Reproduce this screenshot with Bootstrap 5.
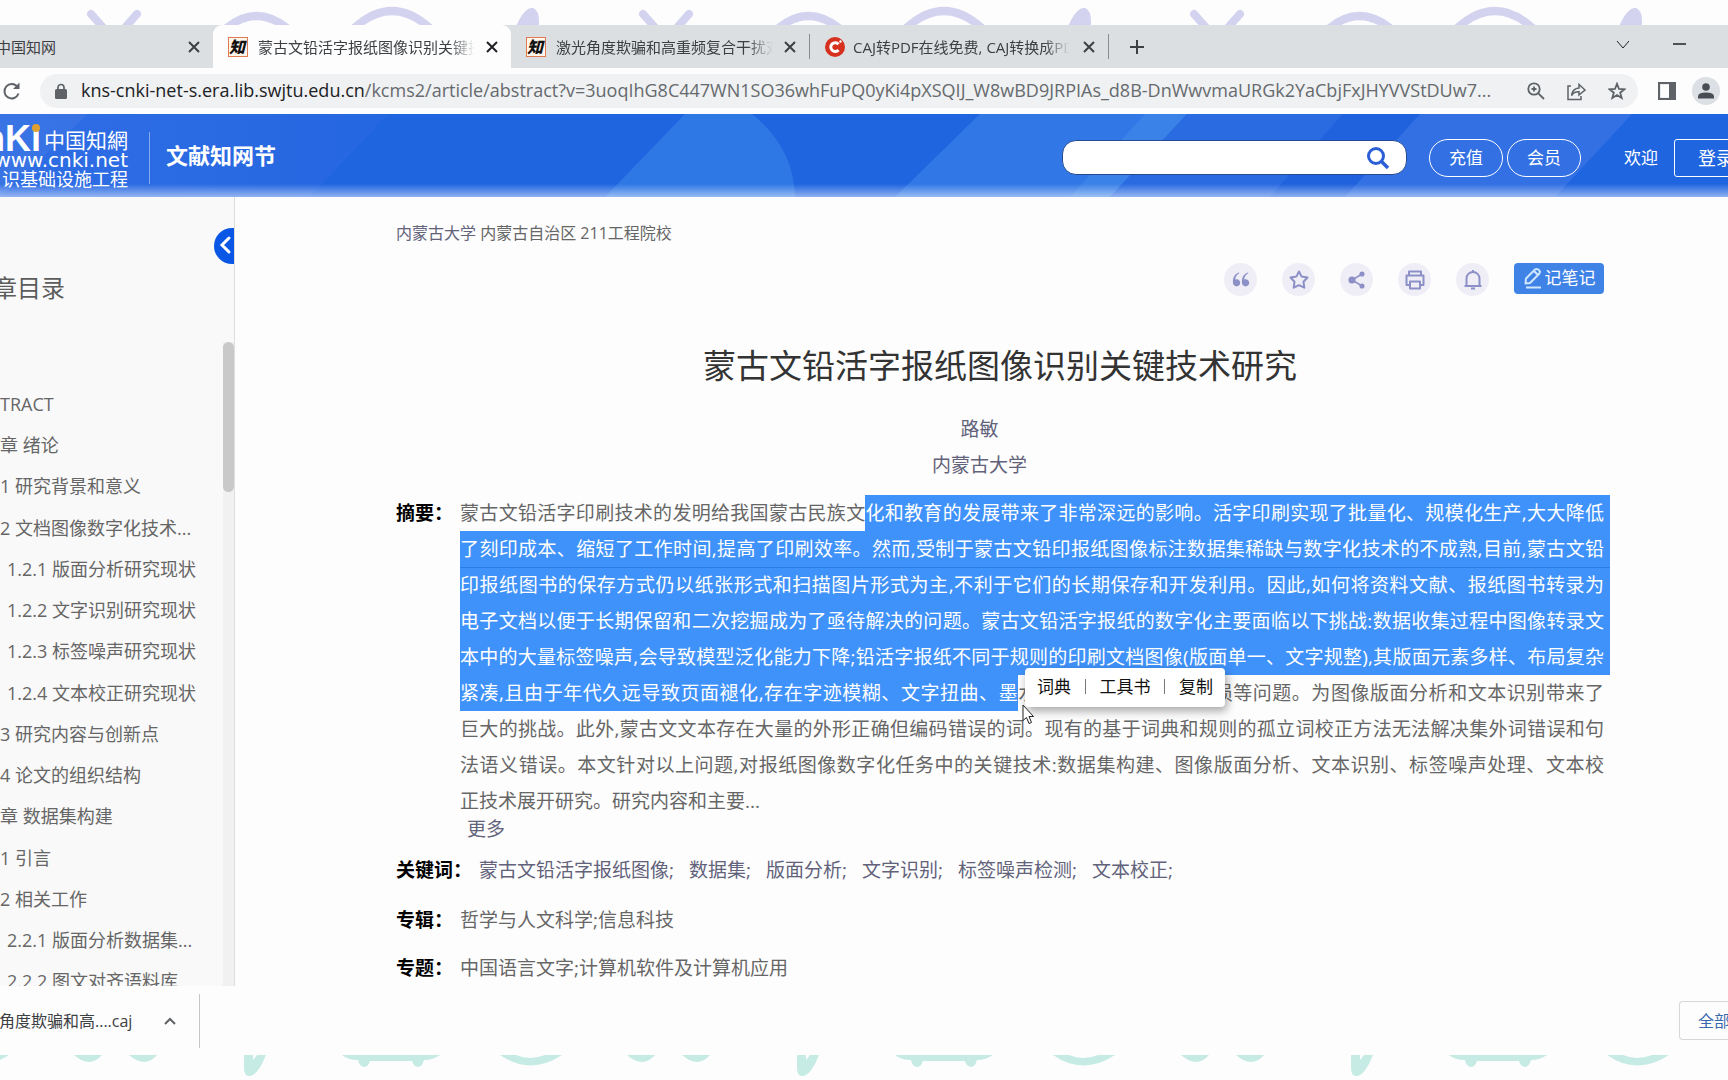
<!DOCTYPE html>
<html lang="zh-CN">
<head>
<meta charset="utf-8">
<meta name="viewport" content="width=device-width, initial-scale=1">
<title>蒙古文铅活字报纸图像识别关键技术研究</title>
<link href="https://cdn.jsdelivr.net/npm/bootstrap@5.3.0/dist/css/bootstrap.min.css" rel="stylesheet">
<style>
body{font-family:"Open Sans","Noto Sans CJK SC",sans-serif;background:#fdfdfd;color:#666;font-size:19px;line-height:28px}
a{color:inherit;text-decoration:none}
svg{display:block;flex:none}
.plain-btn{border:0;background:none;padding:0;color:inherit;line-height:1}
.strip{height:25px;overflow:hidden;flex:none}
/* browser tabs */
.tabbar{height:43px;background:#dcdfe2;color:#3c4043;font-size:15px;line-height:24px;flex:none}
.tab-a{width:213px;padding:0 12px 0 0;border-radius:0 0 10px 0}
.tab-b{width:298px;padding:0 12px 0 15px}
.tab-on{background:#fdfdfd;border-radius:9px 9px 0 0}
.tab-rule{width:1px;height:25px;background:#888b90}
.tab-name{overflow:hidden;white-space:nowrap;width:217px;-webkit-mask-image:linear-gradient(90deg,#000 88%,transparent 100%)}
.tab-cut{margin-left:-4px}
.fav{width:20px;height:20px;border:1px solid #e07a50;background:#fff6ec;color:#111;font:italic 900 16px/17px "Noto Sans CJK SC",sans-serif;overflow:hidden;flex:none;margin-right:10px}
.win-min{margin:0 42px 0 43px}
/* address bar */
.toolbar{height:46px;background:#fdfdfd;color:#5f6368;flex:none}
.omni{height:34px;border-radius:17px;background:#eff1f2;font-size:18px;padding:0 12px 0 15px;min-width:0}
.omni-url{white-space:nowrap;overflow:hidden;color:#666a6e;margin-left:14px;padding-bottom:2px}
.omni-url b{font-weight:400;color:#202124}
.omni-acts{gap:22px}
.avatar{width:28px;height:28px;background:#dcdfe4}
/* site header */
.site{height:83px;background:#2065e0;color:#fff;overflow:hidden;flex:none}
.site-art{position:absolute;inset:0;width:100%;height:100%}
.site-row{position:relative;height:87px}
.site-name{font-size:22px;font-weight:700;padding-bottom:6px}
.site-logo{padding-bottom:4px}
.site-rule{width:1px;height:52px;background:#86aaf0}
.seek{width:345px;height:35px;border:1px solid #234a93;border-radius:14px;background:#fff;padding:0 16px;overflow:hidden;margin-right:22px}
.seek input{border:0;outline:0;background:none;min-width:0;color:#333;font-size:17px}
.pill{width:74px;height:38px;border:1px solid #fff;border-radius:19px;background:none;color:#fff;font-size:17px;padding:0}
.login{width:90px;height:38px;border:1px solid #fff;border-radius:3px 0 0 3px;background:none;color:#fff;font-size:18px;padding:0 0 0 23px;text-align:left;margin-right:-36px}
.hello{font-size:17px;margin-left:43px}
/* contents column */
.toc{width:235px;background:#f9f9f9;border-right:1px solid #dedede;flex:none;overflow:hidden;position:relative}
.toc-title{font-size:24px;line-height:32px;margin:75px 0 38px -7px;color:#5c5c5c}
.toc-list{height:660px;font-size:18px;color:#666;list-style:none}
.toc-list a{white-space:nowrap}
.lv2{padding-left:7px}
.fold{position:absolute;right:0;top:31px;width:20px;height:36px;border-radius:18px 0 0 18px;background:#0a57e6}
.track{width:11px;background:#f1f1f1}
.thumb{height:150px;border-radius:6px;background:#c9c9c9}
/* article */
.article{padding:24px 118px 0 161px;min-width:0}
.crumb{font-size:16px;line-height:24px}
.slate{color:#62627a}
.tools{gap:25px;padding-right:6px;margin:18px 0 46px}
.tool{width:33px;height:33px;border-radius:50%;background:#efeef7}
.note{width:90px;height:31px;border-radius:4px;background:#4083e6;color:#fff;font-size:17px;line-height:1;border:0;padding:0 0 2px;margin-bottom:2px}
.art-title{font-size:33px;line-height:48px;color:#333;font-weight:400;margin:0 6px 25px 0}
.by{padding-right:47px}
.tag-name{color:#000;font-weight:700;margin-right:7px;flex:none}
.abs{line-height:36px;position:relative;min-width:0}
.ln{display:block;white-space:nowrap;text-align:justify;text-align-last:justify;padding-right:6px}
.ln-end{text-align-last:left}
.on{background:#3f92f9;color:#fff}
.on-rule{box-shadow:inset 0 1px #2b7de6}
.sel{background:#3f92f9;color:#fff;padding:5px 0}
.ln-open{padding-right:0}
.ln-open .sel{padding-right:6px}
.more{line-height:20px;padding-left:7px}
.bubble{position:absolute;left:565px;top:173px;width:200px;height:39px;background:#fff;border-radius:4px;box-shadow:2px 4px 10px rgba(0,0,0,.35);color:#111;font-size:17px;line-height:1;padding:0 12px 3px}
.bubble i{width:1px;height:15px;background:#777}
.pointer{position:absolute;left:562px;top:209px}
.keys{gap:15px}
.meta-1{margin-top:17px}.meta-2{margin-top:22px}.meta-3{margin-top:20px}
/* downloads */
.shelf{height:69px;font-size:16px;color:#3c4043;flex:none;overflow:hidden}
.shelf-item{width:200px;height:54px;border-right:1px solid #c4c6c9;padding-right:22px}
.shelf-item a{margin-left:-1px}
.shelf-all{width:49px;height:39px;border:1px solid #d5d7da;border-right:0;border-radius:4px 0 0 4px;background:none;color:#3a68ad;font-size:16px;white-space:nowrap;overflow:hidden;padding:0 0 0 18px;text-align:left}
</style>
<script src="https://cdn.jsdelivr.net/npm/bootstrap@5.3.0/dist/js/bootstrap.bundle.min.js"></script>
</head>
<body class="d-flex flex-column vh-100 overflow-hidden">

<div class="strip">
<svg width="1728" height="25" fill="none" stroke="#d3d3f0" stroke-width="8" stroke-linecap="round" aria-hidden="true">
<defs><g id="doodle"><path d="M91 14L107 32M137 14L121 32M222 32Q256 0 292 32M350 32Q392 -10 434 32"/><path d="M518 32Q526 12 532 12Q537 14 534 32Z" fill="#d3d3f0"/></g></defs>
<use href="#doodle" x="-553"/><use href="#doodle"/><use href="#doodle" x="552"/><use href="#doodle" x="1103"/>
</svg>
</div>

<nav class="tabbar d-flex align-items-center" aria-label="标签页">
<div class="tab-a d-flex align-items-center justify-content-between h-100"><span class="tab-cut">中国知网</span>
<button class="plain-btn" aria-label="关闭"><svg width="14" height="14" stroke="#3c4043" stroke-width="2"><path d="M2 2L12 12M12 2L2 12"/></svg></button></div>
<div class="tab-b tab-on d-flex align-items-center h-100"><span class="fav">知</span><span class="tab-name">蒙古文铅活字报纸图像识别关键技术研究</span>
<button class="plain-btn ms-auto" aria-label="关闭"><svg width="14" height="14" stroke="#202124" stroke-width="2"><path d="M2 2L12 12M12 2L2 12"/></svg></button></div>
<div class="tab-b d-flex align-items-center h-100"><span class="fav">知</span><span class="tab-name">激光角度欺骗和高重频复合干扰对激光</span>
<button class="plain-btn ms-auto" aria-label="关闭"><svg width="14" height="14" stroke="#3c4043" stroke-width="2"><path d="M2 2L12 12M12 2L2 12"/></svg></button></div>
<span class="tab-rule"></span>
<div class="tab-b d-flex align-items-center h-100"><svg class="me-2" width="20" height="20"><circle cx="10" cy="10" r="10" fill="#d6301f"/><path d="M13.500 7.200A4.400 4.400 0 1 0 13.500 13" fill="none" stroke="#fff" stroke-width="3"/><circle cx="15.500" cy="4.500" r="1.200" fill="#fff"/></svg><span class="tab-name">CAJ转PDF在线免费, CAJ转换成PDF在线</span>
<button class="plain-btn ms-auto" aria-label="关闭"><svg width="14" height="14" stroke="#3c4043" stroke-width="2"><path d="M2 2L12 12M12 2L2 12"/></svg></button></div>
<span class="tab-rule"></span>
<button class="plain-btn ms-3 ps-1" aria-label="新标签页"><svg width="16" height="16" stroke="#3c4043" stroke-width="2"><path d="M8 1V15M1 8H15"/></svg></button>
<button class="plain-btn ms-auto" aria-label="搜索标签页"><svg width="14" height="14" fill="none" stroke="#222"><path d="M1 1L7 8L13 1"/></svg></button>
<button class="plain-btn win-min" aria-label="最小化"><svg width="13" height="14" stroke="#222" stroke-width="1.500"><path d="M0 4H13"/></svg></button>
</nav>

<div class="toolbar d-flex align-items-center">
<button class="plain-btn me-3 pe-1" aria-label="重新加载"><svg width="20" height="20" fill="none" stroke="#5f6368" stroke-width="2"><path d="M17.500 6A7.200 7.200 0 1 0 18.500 12.500"/><path d="M19.500 1.500V8H13Z" fill="#5f6368" stroke="none"/></svg></button>
<div class="omni d-flex align-items-center flex-grow-1">
<svg width="12" height="16"><path d="M3 7V4.500a3 3 0 0 1 6 0V7" fill="none" stroke="#5f6368" stroke-width="1.700"/><rect y="6" width="12" height="10" rx="1.500" fill="#5f6368"/></svg>
<span class="omni-url"><b>kns-cnki-net-s.era.lib.swjtu.edu.cn</b>/kcms2/article/abstract?v=3uoqIhG8C447WN1SO36whFuPQ0yKi4pXSQIJ_W8wBD9JRPIAs_d8B-DnWwvmaURGk2YaCbjFxJHYVVStDUw7...</span>
<div class="omni-acts d-flex align-items-center ms-auto">
<button class="plain-btn" aria-label="缩放"><svg width="18" height="18" fill="none" stroke="#5f6368" stroke-width="1.800"><circle cx="7" cy="7" r="5.700"/><path d="M11.300 11.300L17 17M4.500 7H9.500M7 4.500V9.500"/></svg></button>
<button class="plain-btn" aria-label="分享"><svg width="19" height="19" fill="none" stroke="#5f6368" stroke-width="1.500"><path d="M4 4H1V17.500H14V14M4.500 13.500Q5.500 6.500 12 6V2.500L18 8L12 13V9.800Q7 9.500 4.500 13.500Z"/></svg></button>
<button class="plain-btn" aria-label="收藏"><svg width="18" height="18" fill="none" stroke="#5f6368" stroke-width="1.800"><path d="M9 1.800L11 7L16.500 7.300L12.200 10.700L13.700 16L9 13L4.300 16L5.800 10.700L1.500 7.300L7 7Z"/></svg></button>
</div></div>
<button class="plain-btn ms-3 ps-1" aria-label="侧边栏"><svg width="18" height="18"><rect x="1" y="1" width="16" height="16" fill="none" stroke="#5f6368" stroke-width="2.200"/><path d="M11 1H17V17H11Z" fill="#5f6368"/></svg></button>
<button class="plain-btn avatar rounded-circle d-flex justify-content-center align-items-center ms-3 me-2" aria-label="用户"><svg width="16" height="16" fill="#484c55"><circle cx="8" cy="4" r="3.800"/><path d="M0 15.500V13.500Q0 9.500 8 9.500T16 13.500V15.500Z"/></svg></button>
</div>

<header class="site position-relative">
<svg class="site-art" viewBox="0 0 1728 83" preserveAspectRatio="none" aria-hidden="true">
<defs><linearGradient id="fade" x2="0" y2="1"><stop offset="0" stop-color="#fff" stop-opacity="0"/><stop offset="1" stop-color="#fff" stop-opacity=".5"/></linearGradient>
<linearGradient id="left" x2="1"><stop offset="0" stop-color="#2f6de4"/><stop offset="1" stop-color="#2567e1"/></linearGradient></defs>
<path d="M0 0H388L310 83H0Z" fill="url(#left)"/><path d="M0 0H88L0 83Z" fill="#fff" opacity=".05"/>
<path d="M685 0H752Q794 34 795 83H605Z" fill="#2e78e5"/>
<path d="M980 0H1187L1110 83H895Z" fill="#3178e6"/><path d="M1145 0H1187L1110 83H1070Z" fill="#3b82e8"/>
<path d="M1187 0H1343L1270 83H1110Z" fill="#2b6be2"/>
<path d="M1343 0H1420L1345 83H1270Z" fill="#2062dd"/>
<path d="M1420 0H1632L1555 83H1345Z" fill="#3270e4"/>
<rect y="70" width="1728" height="13" fill="url(#fade)"/>
</svg>
<div class="site-row d-flex align-items-center">
<a href="#" class="site-logo" aria-label="中国知网"><svg width="149" height="64" fill="#fff">
<g font-family="Liberation Sans" font-weight="700" font-size="36"><text x="31" y="27" text-anchor="end">nK</text><text x="31" y="27">ı</text></g>
<circle cx="36" cy="4" r="4" fill="#e0a030"/>
<text x="128" y="24" text-anchor="end" font-family="Noto Sans CJK SC" font-size="21">中国知網</text>
<text x="128" y="43" text-anchor="end" font-family="DejaVu Sans" font-size="20">www.cnki.net</text>
<text x="128" y="62" text-anchor="end" font-family="Noto Sans CJK SC" font-size="18">识基础设施工程</text></svg></a>
<span class="site-rule me-3"></span>
<span class="site-name">文献知网节</span>
<form class="seek d-flex align-items-center ms-auto" onsubmit="return false"><input class="flex-grow-1" type="text" aria-label="检索"><button class="plain-btn" aria-label="搜索"><svg width="24" height="24" fill="none" stroke="#2b5fd6" stroke-width="3"><circle cx="10" cy="10" r="7.500"/><path d="M15.500 15.500L22 22" stroke-width="3.500"/></svg></button></form>
<button class="pill me-1">充值</button>
<button class="pill">会员</button>
<a href="#" class="hello me-3">欢迎</a>
<button class="login">登录</button>
</div>
</header>

<main class="d-flex flex-grow-1" style="min-height:0">
<aside class="toc">
<button class="plain-btn fold" aria-label="收起目录"><svg width="20" height="36" fill="none" stroke="#fff" stroke-width="3" stroke-linecap="round"><path d="M15 10L8 17L15 24"/></svg></button>
<h2 class="toc-title fw-normal">章目录</h2>
<div class="d-flex">
<ul class="toc-list d-grid align-items-center flex-grow-1 p-0 m-0">
<li>&nbsp;</li>
<li><a href="#">TRACT</a></li>
<li><a href="#">章 绪论</a></li>
<li><a href="#">1 研究背景和意义</a></li>
<li><a href="#">2 文档图像数字化技术...</a></li>
<li class="lv2"><a href="#">1.2.1 版面分析研究现状</a></li>
<li class="lv2"><a href="#">1.2.2 文字识别研究现状</a></li>
<li class="lv2"><a href="#">1.2.3 标签噪声研究现状</a></li>
<li class="lv2"><a href="#">1.2.4 文本校正研究现状</a></li>
<li><a href="#">3 研究内容与创新点</a></li>
<li><a href="#">4 论文的组织结构</a></li>
<li><a href="#">章 数据集构建</a></li>
<li><a href="#">1 引言</a></li>
<li><a href="#">2 相关工作</a></li>
<li class="lv2"><a href="#">2.2.1 版面分析数据集...</a></li>
<li class="lv2"><a href="#">2.2.2 图文对齐语料库</a></li>
</ul>
<div class="track"><div class="thumb"></div></div>
</div>
</aside>

<article class="article flex-grow-1">
<div class="crumb"><a href="#" class="slate">内蒙古大学</a> 内蒙古自治区 211工程院校</div>
<div class="tools d-flex justify-content-end align-items-center">
<button class="plain-btn tool d-flex justify-content-center align-items-center" aria-label="引用"><svg width="18" height="16" fill="#8c90c6"><path d="M7.500 1Q3.500 3 3.200 7.500A3.600 3.600 0 1 1 1 11Q0 3.500 6.500 0.500ZM16.500 1Q12.500 3 12.200 7.500A3.600 3.600 0 1 1 10 11Q9 3.500 15.500 0.500Z"/></svg></button>
<button class="plain-btn tool d-flex justify-content-center align-items-center" aria-label="收藏"><svg width="20" height="20" fill="none" stroke="#8c90c6" stroke-width="2" stroke-linejoin="round"><path d="M10 1.500L12.600 6.600L18.500 7.500L14.500 11.800L15.300 17.700L10 15.200L4.700 17.700L5.500 11.800L1.500 7.500L7.400 6.600Z"/></svg></button>
<button class="plain-btn tool d-flex justify-content-center align-items-center" aria-label="分享"><svg width="18" height="18" fill="#8c90c6" stroke="#8c90c6" stroke-width="1.500"><path d="M14 3L4 9L14 15" fill="none"/><circle cx="4" cy="9" r="2.800"/><circle cx="14" cy="3" r="1.800"/><circle cx="14" cy="15" r="1.800"/></svg></button>
<button class="plain-btn tool d-flex justify-content-center align-items-center" aria-label="打印"><svg width="20" height="20" fill="none" stroke="#8c90c6" stroke-width="2" stroke-linejoin="round"><path d="M4 5V1.500H16V5M4.500 15H1.500V5.500H18.500V15H15.500M5 11.500H15V18.500H5Z"/></svg></button>
<button class="plain-btn tool d-flex justify-content-center align-items-center" aria-label="提醒"><svg width="20" height="22" fill="none" stroke="#8c90c6" stroke-width="2" stroke-linejoin="round"><path d="M1.500 17H18.500M3.500 17V9.500a6.500 6.500 0 0 1 13 0V17M10 3V1M8 19.500H12"/></svg></button>
<button class="note d-flex align-items-center justify-content-center"><svg width="22" height="22" fill="none" stroke="#cfe6ff" stroke-width="2" stroke-linejoin="round"><path d="M2.500 16.500L3 11.500L12 2.500Q15 1 17 4.500Q17 6 16 7L7 16ZM11 4L15 8M3 20.500H18"/></svg>记笔记</button>
</div>
<h1 class="art-title text-center">蒙古文铅活字报纸图像识别关键技术研究</h1>
<div class="by text-center slate"><a href="#">路敏</a></div>
<div class="by text-center slate pt-2"><a href="#">内蒙古大学</a></div>

<div class="d-flex pt-3">
<span class="tag-name mt-1">摘要：</span>
<div class="abs flex-grow-1">
<span class="ln ln-open">蒙古文铅活字印刷技术的发明给我国蒙古民族文<span class="sel">化和教育的发展带来了非常深远的影响。活字印刷实现了批量化、规模化生产,大大降低</span></span>
<span class="ln on">了刻印成本、缩短了工作时间,提高了印刷效率。然而,受制于蒙古文铅印报纸图像标注数据集稀缺与数字化技术的不成熟,目前,蒙古文铅</span>
<span class="ln on on-rule">印报纸图书的保存方式仍以纸张形式和扫描图片形式为主,不利于它们的长期保存和开发利用。因此,如何将资料文献、报纸图书转录为</span>
<span class="ln on">电子文档以便于长期保留和二次挖掘成为了亟待解决的问题。蒙古文铅活字报纸的数字化主要面临以下挑战:数据收集过程中图像转录文</span>
<span class="ln on">本中的大量标签噪声,会导致模型泛化能力下降;铅活字报纸不同于规则的印刷文档图像(版面单一、文字规整),其版面元素多样、布局复杂</span>
<span class="ln"><span class="sel">紧凑,且由于年代久远导致页面褪化,存在字迹模糊、文字扭曲、墨</span>水渗透以及纸张局部破损等问题。为图像版面分析和文本识别带来了</span>
<span class="ln">巨大的挑战。此外,蒙古文文本存在大量的外形正确但编码错误的词。现有的基于词典和规则的孤立词校正方法无法解决集外词错误和句</span>
<span class="ln">法语义错误。本文针对以上问题,对报纸图像数字化任务中的关键技术:数据集构建、图像版面分析、文本识别、标签噪声处理、文本校</span>
<span class="ln ln-end">正技术展开研究。研究内容和主要...</span>
<div class="more slate"><a href="#">更多</a></div>
<div class="bubble d-flex align-items-center justify-content-between"><a href="#">词典</a><i></i><a href="#">工具书</a><i></i><a href="#">复制</a></div>
<svg class="pointer" width="14" height="22"><path d="M1 1V16.500L4.500 13.500L7 19.500L9.500 18.500L7 12.500H11.500Z" fill="#fff" stroke="#222"/></svg>
</div>
</div>

<div class="meta-1 d-flex"><span class="tag-name">关键词：</span><div class="keys d-flex slate"><a href="#">蒙古文铅活字报纸图像;</a><a href="#">数据集;</a><a href="#">版面分析;</a><a href="#">文字识别;</a><a href="#">标签噪声检测;</a><a href="#">文本校正;</a></div></div>
<div class="meta-2 d-flex"><span class="tag-name">专辑：</span><span>哲学与人文科学;信息科技</span></div>
<div class="meta-3 d-flex"><span class="tag-name">专题：</span><span>中国语言文字;计算机软件及计算机应用</span></div>
</article>
</main>

<div class="shelf d-flex align-items-center justify-content-between">
<div class="shelf-item d-flex align-items-center justify-content-between"><a href="#">角度欺骗和高....caj</a><button class="plain-btn" aria-label="更多选项"><svg width="14" height="10" fill="none" stroke="#5f6368" stroke-width="2"><path d="M2 8L7 3L12 8"/></svg></button></div>
<button class="shelf-all">全部显示</button>
</div>

<footer class="strip">
<svg width="1728" height="25" fill="#c6ebe4" aria-hidden="true">
<defs><g id="wave"><path d="M74 0H102Q90 14 74 0ZM129 0H157Q145 14 129 0ZM244 0H253V5L257 0H266Q258 20 250 21Q244 22 244 12ZM342 0H440Q433 5 424 5Q422 12 418 12Q413 11 412 6H370Q368 12 364 12Q359 11 358 5Q348 5 342 0ZM500 0H516Q530 6 545 0H562Q530 21 500 0Z"/></g></defs>
<use href="#wave" x="-553"/><use href="#wave"/><use href="#wave" x="553"/><use href="#wave" x="1107"/>
</svg>
</footer>
</body>
</html>
